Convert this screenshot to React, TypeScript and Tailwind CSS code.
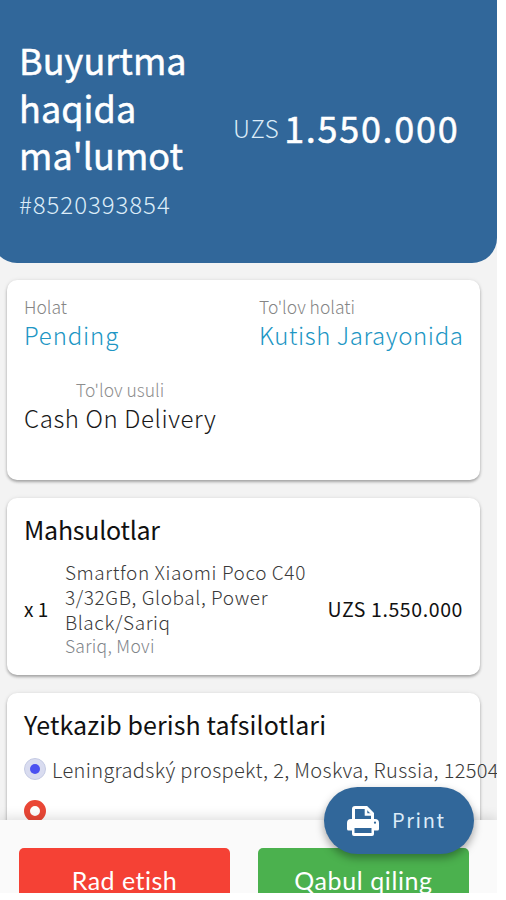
import React from 'react'

const cardStyle = "ml-[7px] w-[473px] bg-white rounded-[10px] shadow-[0_2px_3px_rgba(0,0,0,0.3),0_0_4px_rgba(0,0,0,0.08)]";

const order = {
  number: "#8520393854",
  total: "1.550.000",
  status: "Pending",
  paymentStatus: "Kutish Jarayonida",
  paymentMethod: "Cash On Delivery",
  address: "Leningradský prospekt, 2, Moskva, Russia, 12504",
};

const PrintIcon: React.FC = () => (
  <svg width="32" height="30" viewBox="0 0 32 30" fill="none">
    <path d="M6.5 15V3Q6.5 1.5 8 1.5H19.5L25.5 7.5V15" stroke="white" strokeWidth="3" />
    <path d="M19 1V8.5H27" stroke="white" strokeWidth="2.6" />
    <path
      fillRule="evenodd"
      clipRule="evenodd"
      d="M4 13H28Q32 13 32 17V23Q32 24.5 30.5 24.5H27V28Q27 30 25 30H7Q5 30 5 28V24.5H1.5Q0 24.5 0 23V17Q0 13 4 13ZM7.5 22V27H24.5V22Z"
      fill="white"
    />
    <circle cx="28" cy="16.7" r="1.1" fill="#31679a" />
  </svg>
);

const App: React.FC = () => {
  return (
    <div className="w-[506px] h-[900px] overflow-hidden bg-white font-['Noto_Sans_CJK_KR',sans-serif]">
      <div className="relative flex flex-col w-[497px] h-[893px] overflow-hidden bg-[#f3f3f3] whitespace-nowrap">

        {/* HEADER */}
        <div className="flex shrink-0 items-center -ml-2 pl-[27px] w-[505px] h-[263px] pb-[8px] bg-[#31679a] rounded-b-[25px] text-white">
          <div className="w-[214px]">
            <h1 className="w-[180px] whitespace-normal text-[36px] leading-[47.5px] font-normal tracking-[0.05px] [-webkit-text-stroke:0.5px_white]">
              Buyurtma haqida ma'lumot
            </h1>
            <p className="mt-[10px] text-[24px] leading-[30px] font-light tracking-[0.95px] text-[#dcecf8]">{order.number}</p>
          </div>
          <div className="flex items-center gap-[5px]">
            <span className="text-[24px] leading-[30px] font-light tracking-[0.6px] text-[#dcecf8]">UZS</span>
            <span className="-mt-[1px] text-[36px] leading-[48px] font-normal tracking-[1.7px] [-webkit-text-stroke:0.5px_white]">{order.total}</span>
          </div>
        </div>

        {/* STATUS */}
        <div className={`${cardStyle} shrink-0 mt-[17px] h-[200px] px-[17px] pt-[15px]`}>
          <div className="flex">
            <div className="w-[235px] shrink-0">
              <p className="text-[17.5px] leading-6 font-light text-[#858585]">Holat</p>
              <p className="text-[24px] leading-[30px] mt-[1px] font-light tracking-[0.85px] text-[#2096c4]">{order.status}</p>
            </div>
            <div>
              <p className="text-[17.5px] leading-6 font-light text-[#858585]">To'lov holati</p>
              <p className="text-[24px] leading-[30px] mt-[1px] font-light tracking-[0.6px] text-[#2096c4]">{order.paymentStatus}</p>
            </div>
          </div>
          <div className="mt-[28px] w-[192px]">
            <p className="text-center text-[17.5px] leading-6 font-light text-[#8d8d8d]">To'lov usuli</p>
            <p className="text-[24px] leading-[30px] mt-[1px] font-light tracking-[0.6px] text-[#181818]">{order.paymentMethod}</p>
          </div>
        </div>

        {/* PRODUCTS */}
        <div className={`${cardStyle} shrink-0 mt-[18px] h-[177px] px-[17px] pt-[15px] text-[#111111]`}>
          <h2 className="text-[25px] leading-8 tracking-[-0.25px]">Mahsulotlar</h2>
          <div className="flex items-center mt-[14px]">
            <span className="w-[41px] pt-[2px] text-[19px] leading-6">x 1</span>
            <div className="w-[263px]">
              <p className="w-[262px] whitespace-normal text-[19px] leading-[25px] font-light tracking-[0.6px] text-[#3a3a3a]">
                Smartfon Xiaomi Poco C40 3/32GB, Global, Power Black/Sariq
              </p>
              <p className="mt-[2px] text-[17.5px] leading-5 font-light tracking-[0.3px] text-[#7f858a]">Sariq, Movi</p>
            </div>
            <span className="pt-[2px] text-[19.5px] leading-6 tracking-[0.6px]">UZS {order.total}</span>
          </div>
        </div>

        {/* DELIVERY */}
        <div className={`${cardStyle} shrink-0 mt-[18px] h-[200px] px-[17px] pt-[15px]`}>
          <h2 className="text-[25px] leading-8 tracking-[0.1px] text-[#111111]">Yetkazib berish tafsilotlari</h2>
          <div className="flex items-center mt-[16px]">
            <div className="flex shrink-0 items-center justify-center size-[22px] rounded-full bg-[#d9dcf0] border border-[#c5cbe4]">
              <div className="size-[10px] rounded-full bg-[#4a50f0]" />
            </div>
            <p className="ml-[6px] pt-[1px] text-[20px] leading-[25px] font-light tracking-[0.32px] text-[#3a3a3a]">{order.address}</p>
          </div>
          <div className="mt-[18px] size-[22px] rounded-full border-[6px] border-[#ea4736]" />
        </div>

        {/* ACTIONS */}
        <div className="absolute left-0 bottom-0 flex gap-[28px] pl-[19px] pt-[28px] w-[497px] h-[73px] bg-[#fafafa] shadow-[0_-2px_12px_rgba(0,0,0,0.14)] font-['Lato',sans-serif] text-[25px] leading-[30px] text-white">
          <button className="w-[211px] h-[64px] rounded-[5px] bg-[#f54135] tracking-[0.5px]">Rad etish</button>
          <button className="w-[211px] h-[64px] rounded-[5px] bg-[#4bb14e] tracking-[0.6px]">Qabul qiling</button>
        </div>

        <button className="absolute left-[324px] top-[787px] flex items-center pl-[23px] w-[150px] h-[67px] rounded-full bg-[#31679a] text-[#dcecf8] shadow-[0_4px_8px_rgba(0,0,0,0.35)]">
          <PrintIcon />
          <span className="ml-[13px] -mt-[2px] text-[20px] leading-6 tracking-[1.6px]">Print</span>
        </button>
      </div>
    </div>
  )
}

export default App;
